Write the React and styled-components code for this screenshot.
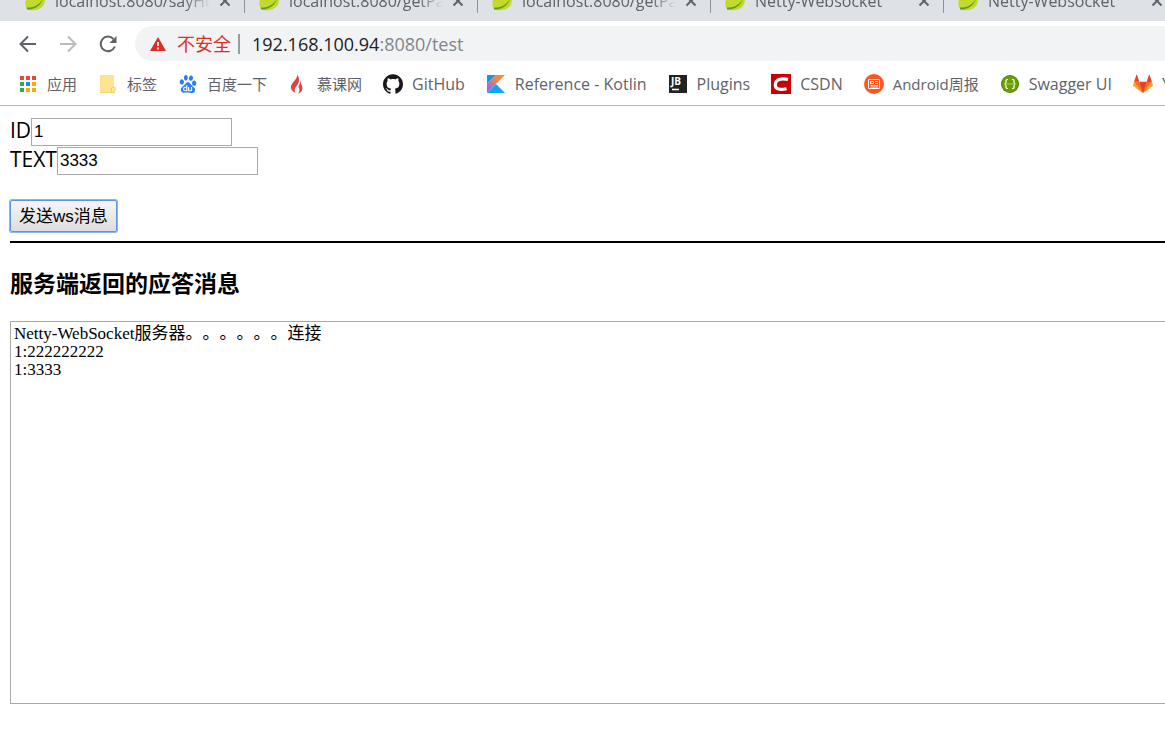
import { useState } from 'react'
import styled, { createGlobalStyle } from 'styled-components'
import { SiBaidu, SiGithub } from 'react-icons/si'

const GlobalStyle = createGlobalStyle`
    *{
        box-sizing: border-box;
    }
    body{
        margin: 0;
        background: #fff;
        overflow: hidden;
        font-family: "Open Sans", "Noto Sans CJK SC", sans-serif;
    }
`
const TabStrip = styled.div`
    display: flex;
    align-items: flex-end;
    height: 21px;
    overflow: hidden;
    background: #dee1e6;
`
const Tab = styled.div`
    display: flex;
    flex: none;
    align-items: center;
    width: 233px;
    height: 40px;
    padding-left: 14px;
    svg{
        flex: none;
    }
    &:first-child{
        width: 245px;
        padding-left: 25px;
    }
`
const TabTitle = styled.span`
    flex: 1;
    margin-left: 10px;
    overflow: hidden;
    white-space: nowrap;
    font-size: 16px;
    line-height: 24px;
    color: #5f6368;
    mask-image: linear-gradient(to right, #000 84%, transparent);
`
const CloseButton = styled.button`
    display: flex;
    align-items: center;
    justify-content: center;
    width: 20px;
    height: 20px;
    margin: 0 9px 0 5px;
    padding: 0;
    border: 0;
    background: none;
`
const TabDivider = styled.span`
    width: 1px;
    height: 24px;
    background: #8f9298;
`
const Toolbar = styled.div`
    display: flex;
    align-items: center;
    gap: 20px;
    padding: 5px 0 5px 18px;
`
const NavButton = styled.button`
    display: flex;
    padding: 0;
    border: 0;
    background: none;
    color: ${props => props.$off ? '#babcbe' : '#5f6368'};
`
const AddressBar = styled.div`
    display: flex;
    flex: 1;
    align-items: center;
    height: 35px;
    margin-left: -3px;
    padding-left: 15px;
    border-radius: 18px 0 0 18px;
    background: #f1f3f4;
    font-size: 18px;
    line-height: 24px;
`
const Warning = styled.span`
    margin: 0 7px 0 11px;
    color: #d93025;
`
const AddressDivider = styled.span`
    width: 2px;
    height: 20px;
    margin-right: 12px;
    background: #9a9da1;
`
const Url = styled.span`
    color: #80868b;
    b{
        font-weight: 400;
        color: #202124;
    }
`
const Bookmarks = styled.nav`
    display: flex;
    align-items: center;
    gap: 21px;
    height: 40px;
    padding: 0 0 3px 18px;
    overflow: hidden;
    border-bottom: 1px solid #b6b6b6;
`
const Bookmark = styled.a`
    display: flex;
    flex: none;
    align-items: center;
    gap: 9px;
    font-size: ${props => props.$latin ? '16px' : '15px'};
    line-height: 20px;
    color: #5f6368;
    text-decoration: none;
    white-space: nowrap;
`
const BookmarkIcon = styled.span`
    display: flex;
    align-items: center;
    justify-content: center;
    width: 20px;
    height: 20px;
`
const Page = styled.main`
    padding: 12px 0 0 10px;
`
const Field = styled.div`
    display: flex;
    align-items: flex-start;
    font-size: 21px;
    line-height: 25px;
    margin-bottom: 1px;
`
const TextInput = styled.input`
    width: 201px;
    height: 28px;
    padding: 0 2px 1px;
    border: 1px solid #a9a9a9;
    font-family: "Liberation Sans", sans-serif;
    font-size: 17px;
`
const SendButton = styled.button`
    display: block;
    height: 32px;
    margin-top: 25px;
    padding: 2px 8px 0;
    border: 1px solid #5e94e6;
    border-radius: 2px;
    box-shadow: 0 0 0 1px #8cb4f2;
    background: linear-gradient(#f6f6f6, #dddddd);
    color: #000;
    font-family: "Liberation Sans", "Noto Sans CJK SC", sans-serif;
    font-size: 17px;
    line-height: 24px;
`
const Line = styled.hr`
    height: 2px;
    margin: 9px 0 0;
    border: 0;
    background: #000;
`
const Title = styled.h3`
    margin: 24px 0 22px;
    font-size: 23px;
    line-height: 32px;
`
const Output = styled.textarea`
    display: block;
    width: 100%;
    padding: 3px 3px 0;
    border: 1px solid #a9a9a9;
    border-right: 0;
    outline: none;
    resize: none;
    font-family: "Liberation Serif", "Noto Sans CJK SC", serif;
    font-size: 17px;
    line-height: 18px;
    text-spacing-trim: space-all;
`

function Leaf(){
    return(
        <svg width="20" height="20" viewBox="0 0 20 20">
            <path d="M18 0C20 5 21 11 18 15C14 20 7 20 2 18C-1 13 0 6 6 4C11 3 16 3 18 0Z" fill="#c5d92d"/>
            <path d="M2 16.5C9 17 14 14 18 8C16 14 10 19 2 18.6Z" fill="#5d9b2c"/>
        </svg>
    )
}

function CloseIcon(){
    return(
        <svg width="12" height="12" viewBox="0 0 12 12" stroke="#5f6368" strokeWidth="2">
            <path d="M1.5 1.5L10.5 10.5M10.5 1.5L1.5 10.5"/>
        </svg>
    )
}

function AppsIcon(){
    const colors = ['#f44336', '#f44336', '#f44336', '#34a853', '#1e88e5', '#fbab00', '#34a853', '#fbab00', '#fbab00']
    return(
        <svg width="20" height="20" viewBox="0 0 20 20">
            {colors.map((color,index)=>(
                <rect key={index} x={2 + index % 3 * 6} y={2 + Math.floor(index / 3) * 6} width="4" height="4" fill={color}/>
            ))}
        </svg>
    )
}

function FolderIcon(){
    return(
        <svg width="20" height="20" viewBox="0 0 20 20">
            <path d="M2 2Q2 1 3 1H15Q16 1 16 2V13L17 14V19H3Q2 19 2 18Z" fill="#ffe48f"/>
            <path d="M2 18.5H17" stroke="#f7d774"/>
            <path d="M13.5 18V14Q15 12 17 13.5V17L16 18.5Z" fill="#ffe9a6" stroke="#f2cf66"/>
        </svg>
    )
}

function FlameIcon(){
    return(
        <svg width="20" height="20" viewBox="0 0 20 20" fill="#e0423e">
            <path d="M9 0.5C10 5 4 8 3 12C2.5 15.5 5 18 7.5 18.8C5.5 15.5 7.5 13.5 9.3 11.3C11.5 8.3 11.8 3.5 9 0.5Z"/>
            <path d="M12.5 6.5C13 9 10.5 11 10.5 13C11.5 14.5 12 17 10 19.5C14 18.5 15.5 14.5 13.7 11.5C13 10 13.3 8.5 12.5 6.5Z"/>
        </svg>
    )
}

function KotlinIcon(){
    return(
        <svg width="20" height="20" viewBox="0 0 20 20">
            <defs>
                <linearGradient id="kotlin" x1="0" y1="1" x2="1" y2="0">
                    <stop offset="0.2" stopColor="#9a6dd7"/>
                    <stop offset="0.7" stopColor="#f68b3c"/>
                </linearGradient>
            </defs>
            <path d="M1 1H10L1 10Z" fill="#1797e8"/>
            <path d="M10 1H19L1 19V10Z" fill="url(#kotlin)"/>
            <path d="M1 19L10 10L19 19Z" fill="#11a5f5"/>
        </svg>
    )
}

function JetBrainsIcon(){
    return(
        <svg width="20" height="20" viewBox="0 0 20 20">
            <rect x="1" y="1" width="18" height="18" fill="#222"/>
            <text x="3" y="11" fill="#fff" fontFamily="Open Sans, sans-serif" fontSize="10" fontWeight="700">JB</text>
            <path d="M4 15.5H11" stroke="#fff" strokeWidth="1.6"/>
        </svg>
    )
}

function CsdnIcon(){
    return(
        <svg width="20" height="20" viewBox="0 0 20 20">
            <rect width="20" height="20" fill="#ca0008"/>
            <path d="M17 5.4C10 4 4.6 5.5 4.3 10.5C4.2 15.5 9 16 15.6 14.8" fill="none" stroke="#fff" strokeWidth="3.2"/>
        </svg>
    )
}

function WeeklyIcon(){
    return(
        <svg width="20" height="20" viewBox="0 0 20 20">
            <circle cx="10" cy="10" r="10" fill="#fc5720"/>
            <path d="M4.5 5.5H15.5V14.5H4.5Z" fill="none" stroke="#fff"/>
            <path d="M6.5 7.5H9.5V9.5H6.5ZM11 7.5H14M11 9.5H14M6.5 11.5H14M6.5 13H14" fill="none" stroke="#fff" strokeWidth="0.8"/>
        </svg>
    )
}

function SwaggerIcon(){
    return(
        <svg width="18" height="18" viewBox="0 0 18 18">
            <circle cx="9" cy="9" r="9" fill="#4f8500"/>
            <circle cx="9" cy="9" r="8" fill="#6d9e00"/>
            <path d="M7 4.5Q5 4.3 5 6V7.5Q5 9 3.5 9Q5 9 5 10.5V12Q5 13.7 7 13.5M11 4.5Q13 4.3 13 6V7.5Q13 9 14.5 9Q13 9 13 10.5V12Q13 13.7 11 13.5" fill="none" stroke="#fff" strokeWidth="1.2"/>
            <path d="M6.5 9H7.5M8.5 9H9.5M10.5 9H11.5" stroke="#fff" strokeWidth="1.2"/>
        </svg>
    )
}

function GitlabIcon(){
    return(
        <svg width="20" height="20" viewBox="0 0 36 36">
            <path fill="#e24329" d="M2 14l9.38 9v-9l-4-12.28c-.2-.63-1.18-.63-1.38 0zM34 14l-9.38 9v-9l4-12.28c.2-.63 1.18-.63 1.38 0zM18 34.4L3 14H33Z"/>
            <path fill="#fc6d26" d="M18 34.4L11.4 14H2L6 25ZM18 34.4L24.6 14H34L30 25Z"/>
            <path fill="#fca326" d="M2 14L.1 20.2c-.2.5 0 1.2.5 1.5L18 34.4zM34 14l1.9 6.2c.2.5 0 1.2-.5 1.5L18 34.4z"/>
        </svg>
    )
}

const tabs = ['localhost:8080/sayHello', 'localhost:8080/getParam', 'localhost:8080/getParam', 'Netty-Websocket', 'Netty-Websocket']

const bookmarks = [
    {name: '应用', icon: <AppsIcon/>},
    {name: '标签', icon: <FolderIcon/>},
    {name: '百度一下', icon: <SiBaidu size="18" color="#2b7df7"/>},
    {name: '慕课网', icon: <FlameIcon/>},
    {name: 'GitHub', icon: <SiGithub size="20" color="#191717"/>, latin: true},
    {name: 'Reference - Kotlin', icon: <KotlinIcon/>, latin: true},
    {name: 'Plugins', icon: <JetBrainsIcon/>, latin: true},
    {name: 'CSDN', icon: <CsdnIcon/>, latin: true},
    {name: 'Android周报', icon: <WeeklyIcon/>},
    {name: 'Swagger UI', icon: <SwaggerIcon/>, latin: true},
    {name: 'YApi', icon: <GitlabIcon/>, latin: true},
]

function Browser(){
    return(
        <header>
            <TabStrip>
                {tabs.map((title,index)=>(
                    <Tab key={index}>
                        <Leaf/>
                        <TabTitle>{title}</TabTitle>
                        <CloseButton aria-label="Close tab"><CloseIcon/></CloseButton>
                        <TabDivider/>
                    </Tab>
                ))}
            </TabStrip>
            <Toolbar>
                <NavButton aria-label="Back">
                    <svg width="20" height="20" viewBox="0 0 20 20" fill="none" stroke="currentColor" strokeWidth="2"><path d="M18 10H3M10 2.5L2.5 10L10 17.5"/></svg>
                </NavButton>
                <NavButton aria-label="Forward" $off>
                    <svg width="20" height="20" viewBox="0 0 20 20" fill="none" stroke="currentColor" strokeWidth="2"><path d="M2 10H17M10 2.5L17.5 10L10 17.5"/></svg>
                </NavButton>
                <NavButton aria-label="Reload">
                    <svg width="20" height="20" viewBox="0 0 20 20" fill="none" stroke="currentColor" strokeWidth="2"><path d="M16.8 12.5A7.3 7.3 0 1 1 15.4 5"/><path d="M18.5 2V9H11.5Z" fill="currentColor" stroke="none"/></svg>
                </NavButton>
                <AddressBar>
                    <svg width="16" height="16" viewBox="0 0 16 16"><path d="M8 1L16 15H0Z" fill="#d93025"/><path d="M8 6V10M8 11.5V13.5" stroke="#fff" strokeWidth="1.6"/></svg>
                    <Warning>不安全</Warning>
                    <AddressDivider/>
                    <Url><b>192.168.100.94</b>:8080/test</Url>
                </AddressBar>
            </Toolbar>
            <Bookmarks>
                {bookmarks.map(item=>(
                    <Bookmark href="#" key={item.name} $latin={item.latin}>
                        <BookmarkIcon>{item.icon}</BookmarkIcon>
                        {item.name}
                    </Bookmark>
                ))}
            </Bookmarks>
        </header>
    )
}

function App(){
    const [id,setId] = useState('1')
    const [text,setText] = useState('3333')
    const [output,setOutput] = useState('Netty-WebSocket服务器。。。。。。连接\n1:222222222\n1:3333')

    const send = ()=>{
        setOutput(`${output}\n${id}:${text}`)
    }

    return(
        <>
        <GlobalStyle/>
        <Browser/>
        <Page>
            <Field>
                <label htmlFor="id">ID</label>
                <TextInput id="id" value={id} onChange={e=>setId(e.target.value)}/>
            </Field>
            <Field>
                <label htmlFor="text">TEXT</label>
                <TextInput id="text" value={text} onChange={e=>setText(e.target.value)}/>
            </Field>
            <SendButton onClick={send}>发送ws消息</SendButton>
            <Line/>
            <Title id="output-title">服务端返回的应答消息</Title>
            <Output rows="21" aria-labelledby="output-title" spellCheck="false" value={output} onChange={e=>setOutput(e.target.value)}/>
        </Page>
        </>
    )
}

export default App
